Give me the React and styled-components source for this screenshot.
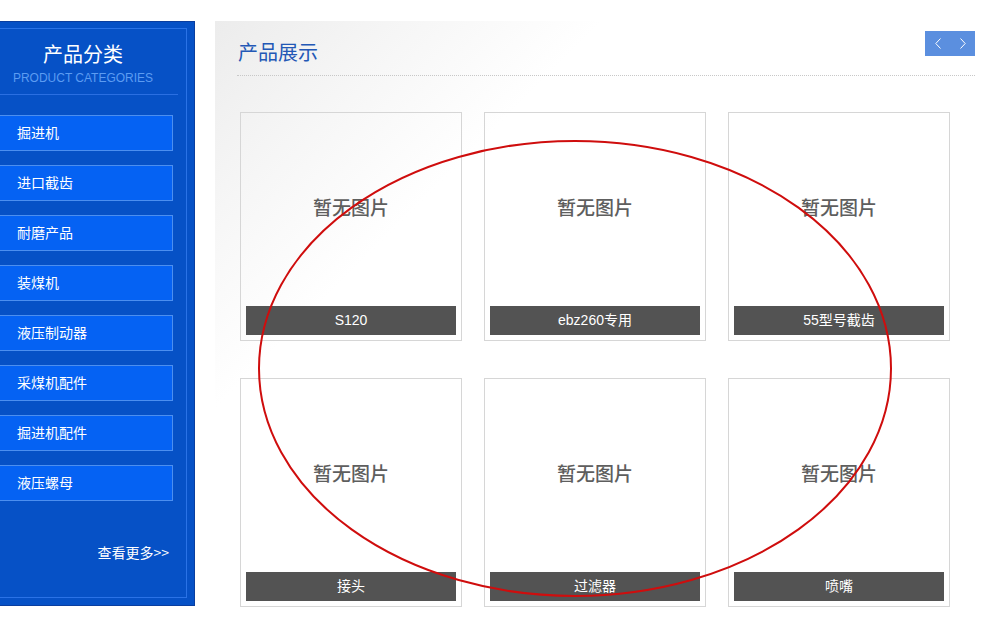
import React from "react";
import styled, { createGlobalStyle } from "styled-components";

const Global = createGlobalStyle`
  html, body { margin: 0; padding: 0; background: #fff; }
  body { font-family: "Liberation Sans", "Noto Sans CJK SC", sans-serif; overflow: hidden; }
`;

const Page = styled.div`
  position: relative;
  display: flex;
  align-items: flex-start;
  gap: 20px;
  padding-top: 21px;
  width: 1002px;
  height: 619px;
  box-sizing: border-box;
`;

const Sidebar = styled.aside`
  width: 195px;
  height: 585px;
  box-sizing: border-box;
  background: #0651c6;
  border: 1px solid #0a3e9f;
  border-left: none;
  padding: 6px 7px 7px 0;
  flex-shrink: 0;
`;

const SideInner = styled.div`
  height: 100%;
  box-sizing: border-box;
  border: 1px solid #2a72e6;
  border-left: none;
  display: flex;
  flex-direction: column;
`;

const SideHead = styled.div`
  width: 178px;
  padding-top: 13px;
  padding-bottom: 8px;
  border-bottom: 1px solid #2a6fe2;
  display: flex;
  flex-direction: column;
  align-items: center;
  padding-right: 12px;
  box-sizing: border-box;
`;

const SideTitle = styled.div`
  color: #fff;
  font-size: 20px;
  line-height: 24px;
  font-family: "Noto Sans CJK SC", sans-serif;
`;

const SideSub = styled.div`
  color: #5c9cf2;
  font-size: 12px;
  line-height: 16px;
  margin-top: 4px;
`;

const Menu = styled.ul`
  list-style: none;
  margin: 20px 0 0;
  padding: 0;
  display: flex;
  flex-direction: column;
  gap: 14px;
`;

const MenuItem = styled.li`
  width: 173px;
  height: 36px;
  box-sizing: border-box;
  background: #0562f3;
  border: 1px solid #4c8ff0;
  border-left: none;
  color: #fff;
  font-size: 14px;
  line-height: 32px;
  padding-left: 17px;
  font-family: "Noto Sans CJK SC", sans-serif;
`;

const More = styled.div`
  margin-top: 42px;
  width: 169px;
  text-align: right;
  color: #fff;
  font-size: 14px;
  line-height: 18px;
  font-family: "Noto Sans CJK SC", sans-serif;
`;

const Main = styled.main`
  flex: 1;
  height: 598px;
  box-sizing: border-box;
  padding: 10px 27px 0 22px;
  background: linear-gradient(135deg, #ececec 0%, #f6f6f6 14%, #ffffff 28%);
`;

const Header = styled.div`
  display: flex;
  justify-content: space-between;
  align-items: flex-start;
  border-bottom: 1px dotted #c8c8c8;
  height: 45px;
  box-sizing: border-box;
`;

const Title = styled.h2`
  margin: 9px 0 0 1px;
  font-weight: normal;
  font-size: 20px;
  line-height: 24px;
  color: #2358b6;
  font-family: "Noto Sans CJK SC", sans-serif;
`;

const Nav = styled.div`
  display: flex;
  width: 50px;
  height: 25px;
  background: #5b8fdf;
`;

const NavBtn = styled.span`
  flex: 1;
  display: flex;
  align-items: center;
  justify-content: center;
`;

const Grid = styled.div`
  margin: 36px 0 0 3px;
  display: grid;
  grid-template-columns: repeat(3, 222px);
  column-gap: 22px;
  row-gap: 37px;
`;

const Card = styled.div`
  height: 229px;
  box-sizing: border-box;
  border: 1px solid #d6d6d6;
  display: flex;
  flex-direction: column;
`;

const NoImg = styled.div`
  flex: 1;
  display: flex;
  align-items: center;
  justify-content: center;
  color: #5e5e5e;
  font-size: 19px;
  font-weight: 500;
  padding-bottom: 7px;
  font-family: "Noto Sans CJK SC", sans-serif;
`;

const Label = styled.div`
  margin: 0 5px 5px;
  height: 29px;
  background: #535353;
  color: #fff;
  font-size: 14px;
  line-height: 29px;
  text-align: center;
`;

const Overlay = styled.svg`
  position: absolute;
  left: 0;
  top: 0;
  pointer-events: none;
`;

const categories = ["掘进机", "进口截齿", "耐磨产品", "装煤机", "液压制动器", "采煤机配件", "掘进机配件", "液压螺母"];
const products = ["S120", "ebz260专用", "55型号截齿", "接头", "过滤器", "喷嘴"];

const Chevron = ({ dir }) => (
  <svg width="6" height="11" viewBox="0 0 6 11">
    <path
      d={dir === "left" ? "M5.5 0.5 L0.8 5.5 L5.5 10.5" : "M0.5 0.5 L5.2 5.5 L0.5 10.5"}
      fill="none"
      stroke="#fff"
      strokeWidth="1"
    />
  </svg>
);

export default function App() {
  return (
    <>
      <Global />
      <Page>
        <Sidebar>
          <SideInner>
            <SideHead>
              <SideTitle>产品分类</SideTitle>
              <SideSub>PRODUCT CATEGORIES</SideSub>
            </SideHead>
            <Menu>
              {categories.map((c) => (
                <MenuItem key={c}>{c}</MenuItem>
              ))}
            </Menu>
            <More>查看更多&gt;&gt;</More>
          </SideInner>
        </Sidebar>
        <Main>
          <Header>
            <Title>产品展示</Title>
            <Nav>
              <NavBtn><Chevron dir="left" /></NavBtn>
              <NavBtn><Chevron dir="right" /></NavBtn>
            </Nav>
          </Header>
          <Grid>
            {products.map((p) => (
              <Card key={p}>
                <NoImg>暂无图片</NoImg>
                <Label>{p}</Label>
              </Card>
            ))}
          </Grid>
        </Main>
        <Overlay width="1002" height="619">
          <ellipse cx="575" cy="368.5" rx="316" ry="227.5" fill="none" stroke="#cf0d0d" strokeWidth="2" />
        </Overlay>
      </Page>
    </>
  );
}
